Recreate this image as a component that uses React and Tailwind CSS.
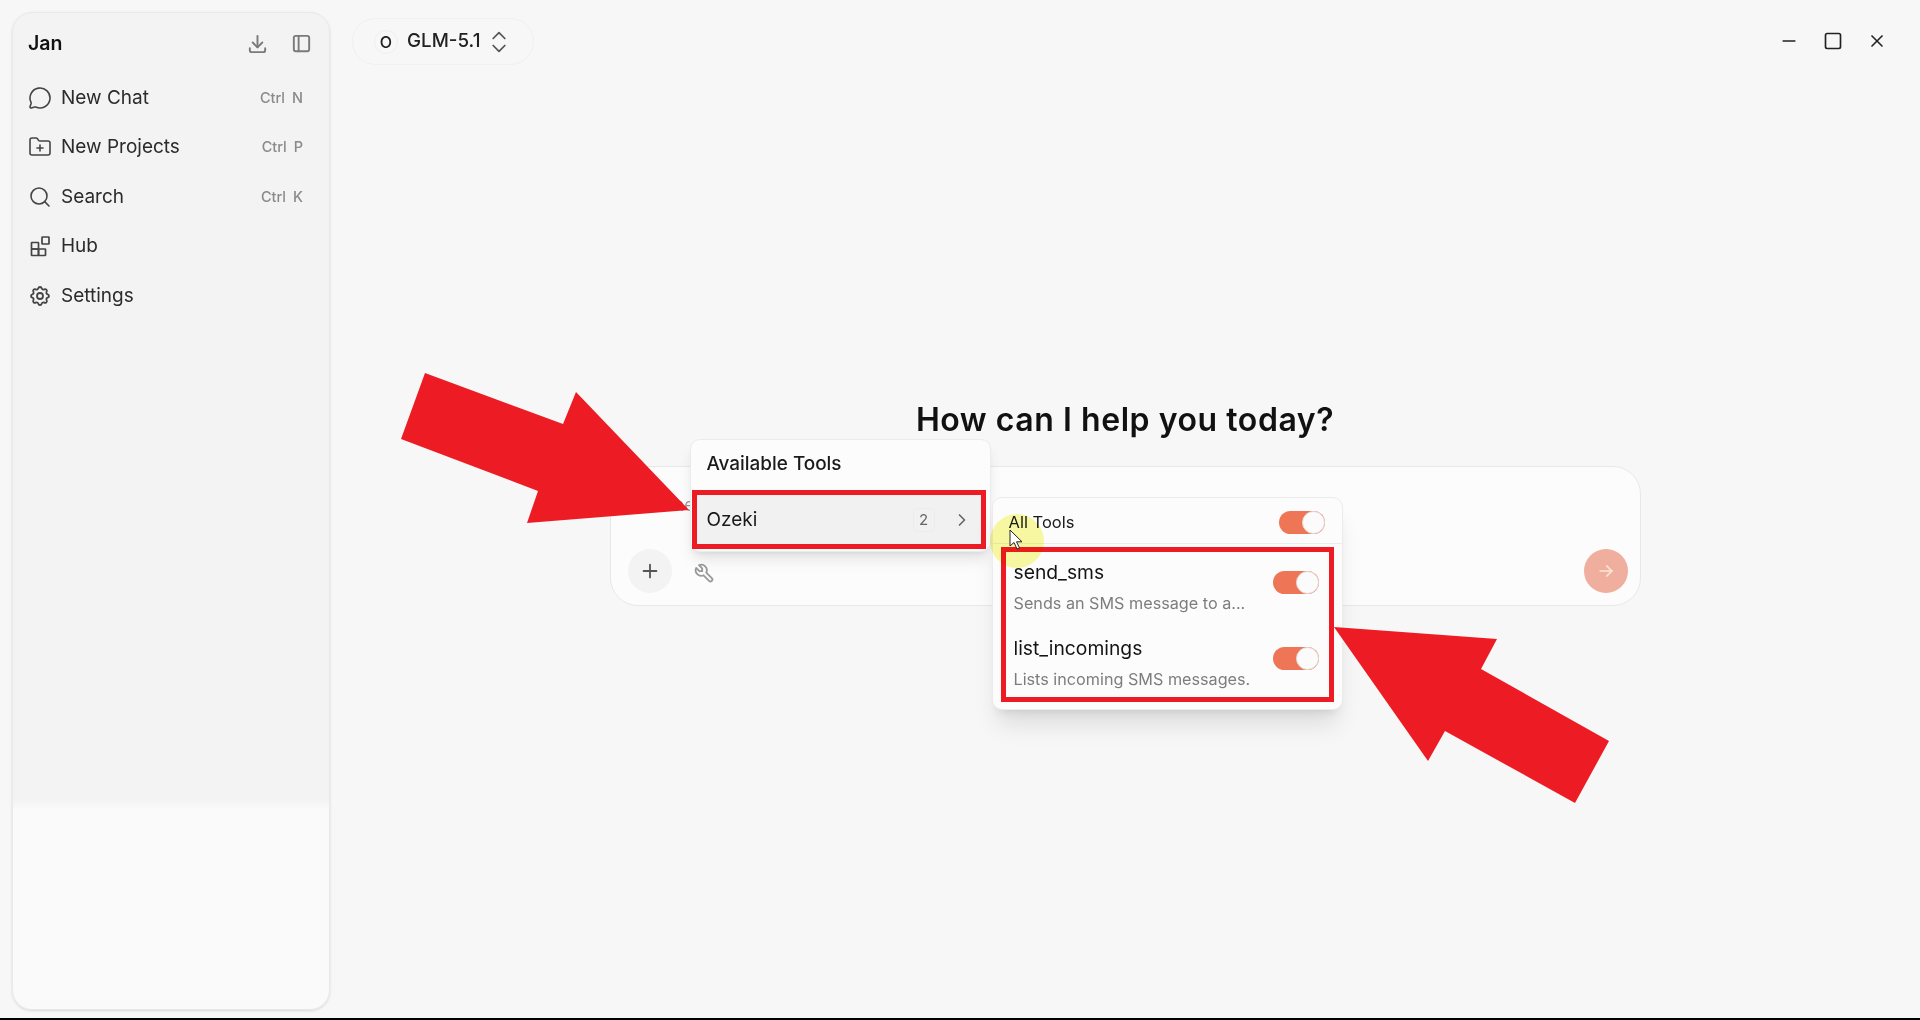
import React from 'react';
import { MessageCircle, FolderPlus, Search, ChevronsUpDown } from 'lucide-react';
import {
  TbSettings,
  TbDownload,
  TbLayoutSidebar,
  TbPlus,
  TbTool,
  TbArrowRight,
  TbChevronRight,
  TbMinus,
  TbSquare,
  TbX,
} from 'react-icons/tb';

const HubIcon = ({ className }) => (
  <svg viewBox="0 0 24 24" fill="none" stroke="currentColor" strokeWidth="1.7" className={className}>
    <rect x="3.5" y="8.5" width="7" height="6.5" rx="0.5" />
    <rect x="3.5" y="15" width="7" height="6.5" rx="0.5" />
    <rect x="10.5" y="15" width="7" height="6.5" rx="0.5" />
    <rect x="14" y="3" width="7" height="7" rx="0.5" />
  </svg>
);

const menuItems = [
  { label: 'New Chat', icon: MessageCircle, keys: 'N', stroke: 1.6 },
  { label: 'New Projects', icon: FolderPlus, keys: 'P', stroke: 1.6 },
  { label: 'Search', icon: Search, keys: 'K', stroke: 1.6 },
  { label: 'Hub', icon: HubIcon },
  { label: 'Settings', icon: TbSettings, stroke: 1.8 },
];

const Toggle = ({ className = '' }) => (
  <div className={`flex h-[23px] w-[46px] shrink-0 items-center justify-end rounded-full bg-[#ee7555] ${className}`}>
    <div className="h-[23px] w-[23px] rounded-full border border-[#e3d9d6] bg-[#fbfbfb]" />
  </div>
);

const ToolRow = ({ name, desc }) => (
  <div className="flex h-[55px] items-center justify-between pl-2 pr-[10px]">
    <div>
      <p className="text-[19.3px] leading-[26px] text-[#141414]">{name}</p>
      <p className="mt-[7px] text-[16.2px] leading-[22px] text-[#7d7d7d]">{desc}</p>
    </div>
    <Toggle className="mb-[8px]" />
  </div>
);

const App = () => {
  return (
    <div className="flex h-screen overflow-hidden bg-[#f7f7f7] font-['Inter',sans-serif]">
      <aside className="mb-[10px] ml-3 mt-3 w-[318px] shrink-0 rounded-[20px] border border-[#e9e9e9] bg-linear-to-b from-[#f3f3f3] from-79% to-[#fafafa] to-80% shadow-sm">
        <div className="flex h-[60px] items-center justify-between pl-[15px] pr-[16px] pt-[1px]">
          <span className="text-[19.5px] font-semibold text-[#111]">Jan</span>
          <div className="flex items-center gap-[21px] text-[#7a7a7a]">
            <TbDownload className="h-[23px] w-[23px]" />
            <TbLayoutSidebar className="h-[23px] w-[23px]" />
          </div>
        </div>
        <nav className="flex flex-col">
          {menuItems.map((item) => (
            <div key={item.label} className="flex h-[49.5px] items-center pl-[15px] pr-[26px]">
              <item.icon strokeWidth={item.stroke} className="h-[24px] w-[24px] shrink-0 text-[#444]" />
              <span className="ml-[9px] flex-1 text-[19px] text-[#2b2b2b]">{item.label}</span>
              {item.keys && (
                <span className="flex gap-[7px] text-[14.5px] font-medium text-[#8a8a8a]">
                  <span>Ctrl</span>
                  <span>{item.keys}</span>
                </span>
              )}
            </div>
          ))}
        </nav>
      </aside>

      <main className="flex min-w-0 flex-1 flex-col">
        <header className="flex h-[82px] shrink-0 items-start justify-between">
          <div className="ml-[22px] mt-[18px] flex h-[47px] w-[182px] items-center rounded-full border border-[#f0f0f0] pl-[21px]">
            <span className="flex h-[24px] w-[24px] items-center justify-center rounded-full border border-[#efefef] text-[16px] font-medium text-[#222]">
              O
            </span>
            <span className="ml-[9px] text-[18.8px] font-medium text-[#222]">GLM-5.1</span>
            <ChevronsUpDown strokeWidth={1.5} className="ml-[5px] h-[28px] w-[28px] text-[#555]" />
          </div>
          <div className="mr-[33px] mt-[31px] flex items-center gap-[24px] text-[#222]">
            <TbMinus className="h-[20px] w-[20px]" />
            <TbSquare className="h-[20px] w-[20px]" />
            <TbX className="h-[20px] w-[20px]" />
          </div>
        </header>

        <div className="flex flex-1 flex-col items-center justify-center pb-[101px]">
          <h1 className="mb-[23px] text-[32px] font-semibold leading-[47px] tracking-[0.55px] text-[#111]">
            How can I help you today?
          </h1>
          <div className="relative h-[140px] w-[1031px] rounded-[28px] border border-[#e8e8e8] bg-[#fcfcfc]">
            <span className="absolute left-[24px] top-[26px] text-[17px] text-[#999]">Ask me</span>
            <div className="absolute bottom-[12px] left-[17px] flex items-center gap-[21px]">
              <div className="flex h-[44px] w-[44px] items-center justify-center rounded-full bg-[#f3f3f3]">
                <TbPlus className="h-[22px] w-[22px] text-[#555]" />
              </div>
              <TbTool className="mt-[4px] h-[22px] w-[22px] text-[#9a9a9a]" />
            </div>
            <div className="absolute bottom-[12px] right-[12px] flex h-[44px] w-[44px] items-center justify-center rounded-full bg-[#efae9e]">
              <TbArrowRight className="h-[20px] w-[20px] text-[#fbe9d8]" />
            </div>

            {/* tools menu */}
            <div className="absolute left-[79px] top-[-28px] h-[113px] w-[301px] rounded-[10px] border border-[#ececec] bg-[#fcfcfc] shadow-lg">
              <p className="flex h-[50px] items-center pb-[1px] pl-[16px] text-[18.9px] font-medium text-[#1a1a1a]">Available Tools</p>
              <div className="ml-[1px] flex h-[59px] w-[294px] items-center border-[5px] border-[#ed1c24] bg-[#f1f1f1] pl-[10px] pr-[9px] pt-[2px]">
                <span className="flex-1 text-[19px] text-[#1a1a1a]">Ozeki</span>
                <span className="mr-[17px] flex h-[24px] w-[22px] items-center justify-center rounded-[5px] border border-[#ececec] text-[15px] text-[#666]">
                  2
                </span>
                <TbChevronRight className="h-[20px] w-[20px] text-[#666]" />
              </div>
            </div>

            {/* submenu with the tools */}
            <div className="absolute left-[381px] top-[30px] h-[213px] w-[351px] rounded-[10px] border border-[#ececec] bg-[#fcfcfc] shadow-xl">
              <div className="flex h-[46px] items-center justify-between border-b border-[#ececec] pl-[16px] pr-[17px] pt-[4px]">
                <span className="text-[16.5px] text-[#1a1a1a]">All Tools</span>
                <Toggle />
              </div>
              <div className="ml-[8px] mt-[3px] flex h-[155px] w-[333px] flex-col gap-[21px] border-[5px] border-[#ed1c24] pt-[7px]">
                <ToolRow name="send_sms" desc="Sends an SMS message to a..." />
                <ToolRow name="list_incomings" desc="Lists incoming SMS messages." />
              </div>
            </div>
          </div>
        </div>
      </main>

      {/* annotations from the video */}
      <svg className="pointer-events-none absolute left-0 top-0 h-[1020px] w-[1920px]" viewBox="0 0 1920 1020">
        <polygon points="425,373 563,424 576,392 689,510 527,523 538,491 401,439" fill="#ed1c24" />
        <polygon points="1334,627 1497,639 1481,669 1609,741 1575,803 1445,731 1428,761" fill="#ed1c24" />
        <circle cx="1017" cy="541" r="27" fill="#fafaa4" className="mix-blend-multiply" />
        <path d="M1010 530 v16 l4 -3.5 l3 6.5 l2.5 -1.2 l-3 -6 h5.5 z" fill="#fff" stroke="#222" strokeWidth="1" />
      </svg>

      <div className="absolute bottom-0 left-0 h-[2px] w-full bg-black" />
    </div>
  );
};

export default App;
